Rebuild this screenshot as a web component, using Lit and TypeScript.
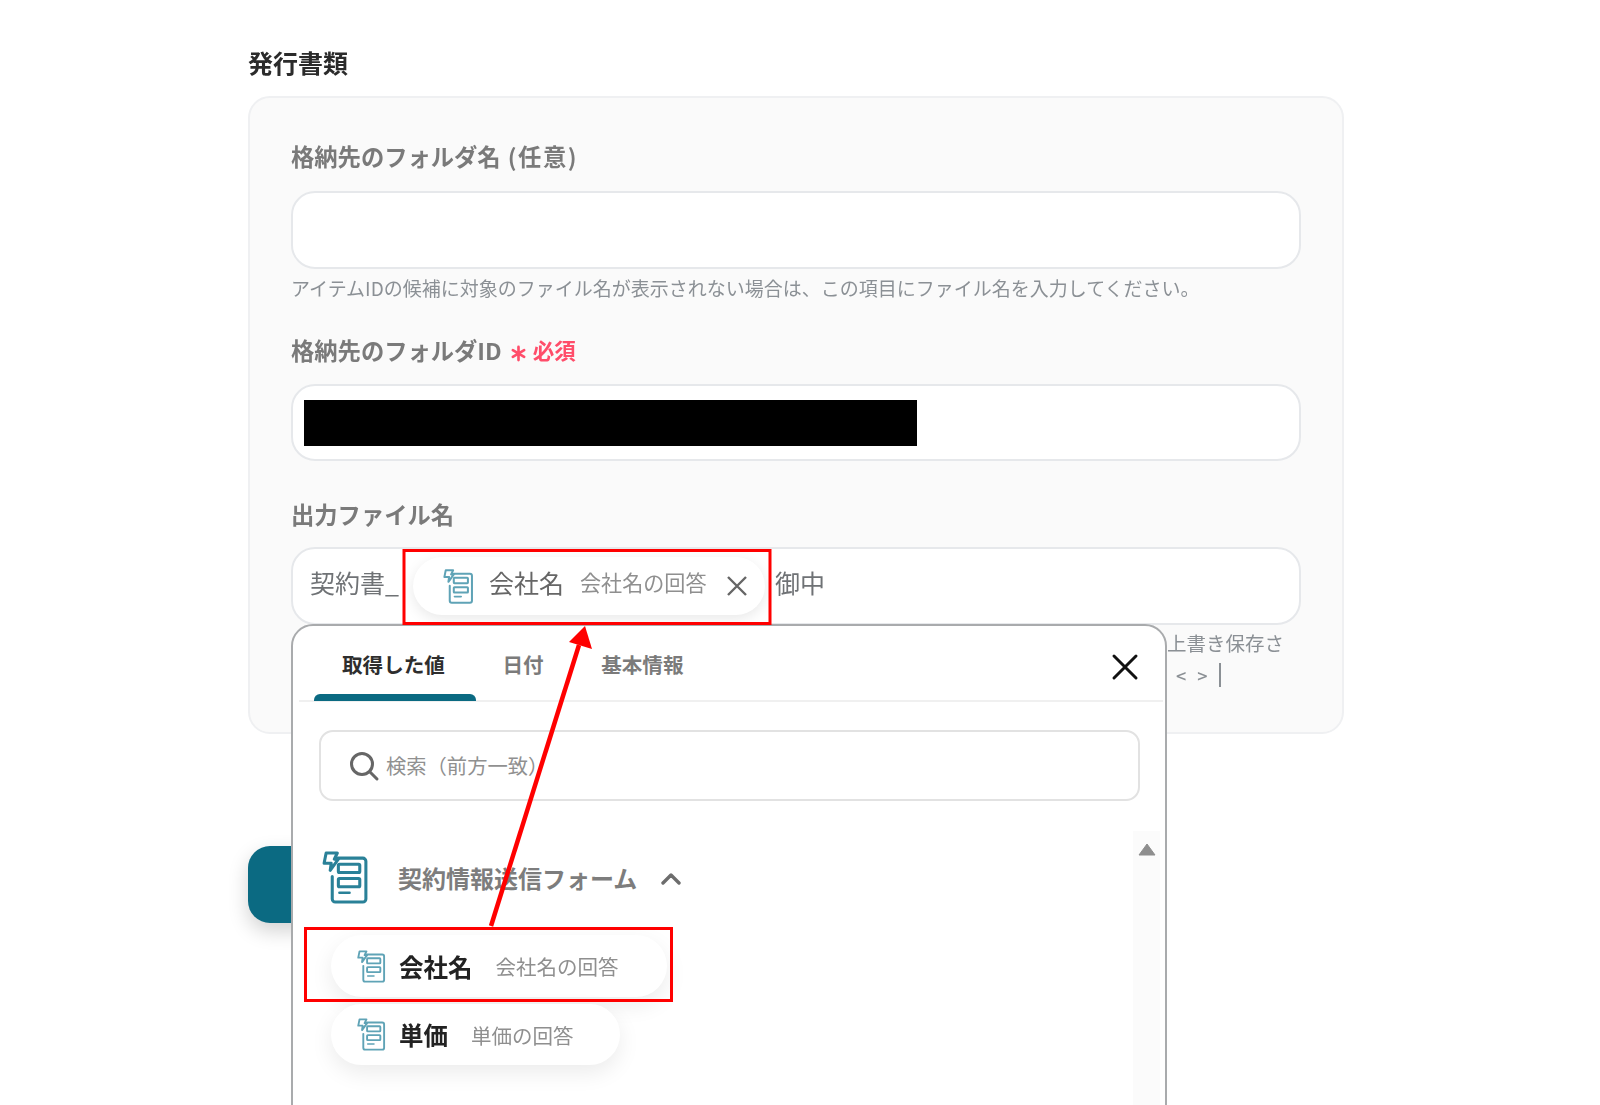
import { LitElement, html, css, svg } from "lit";
import { customElement } from "lit/decorators.js";

const formIcon = (cls: string) => html`<svg class=${cls} viewBox="0 0 46 52" fill="none" stroke="currentColor" stroke-width="3" stroke-linejoin="round" stroke-linecap="round">
  <path d="M14 7 H40 a3 3 0 0 1 3 3 V47 a3 3 0 0 1 -3 3 H13 a3 3 0 0 1 -3 -3 V25"/>
  <path d="M4 2 H15 L12 8 H16 L8 19 L9 12 H2 Z"/>
  <rect x="16" y="13" width="21" height="8" rx="1"/>
  <rect x="16" y="27" width="21" height="8" rx="1"/>
  <path d="M17 41 H27" stroke-width="2.4"/>
</svg>`;

@customElement("app-root")
export class AppRoot extends LitElement {
  static styles = css`
    :host {
      display: block;
      position: relative;
      width: 1600px;
      height: 1105px;
      overflow: hidden;
      background: #fff;
      font-family: "Noto Sans CJK JP", "Noto Sans", sans-serif;
      color: #777;
    }
    * { box-sizing: border-box; }
    .page {
      display: flex;
      flex-direction: column;
      align-items: flex-start;
      padding: 45px 0 0 248px;
      filter: blur(0.35px);
    }
    .heading {
      font-size: 25px;
      line-height: 34px;
      font-weight: 700;
      color: #2b2b2b;
      margin: 0 0 17px 0;
    }
    .panel {
      width: 1096px;
      height: 638px;
      padding: 42px 41px 0 41px;
      background: #fafafa;
      border: 2px solid #eff0f2;
      border-radius: 22px;
      display: flex;
      flex-direction: column;
    }
    .label {
      font-size: 23.3px;
      line-height: 32px;
      font-weight: 700;
      color: #7a7a7a;
      display: flex;
      align-items: center;
      height: 36px;
      padding-bottom: 4px;
      white-space: nowrap;
    }
    .paren { margin-left: 7px; letter-spacing: 1.6px; }
    .req { color: #ff4d6a; font-size: 21.5px; margin-left: 8px; display: flex; align-items: center; }
    .star { width: 17px; height: 17px; margin-right: 6px; margin-top: 6px; flex: none; }
    .input {
      width: 1010px;
      height: 78px;
      margin-top: 15px;
      background: #fff;
      border: 2px solid #e6e8eb;
      border-radius: 24px;
      flex: none;
    }
    .help {
      font-size: 19px;
      line-height: 26px;
      color: #8b9095;
      margin-top: 6px;
      white-space: nowrap;
    }
    .l2 { margin-top: 33px; }
    .l3 { margin-top: 37px; }
    .id-input { display: flex; align-items: center; padding-left: 11px; margin-top: 14px; height: 77px; }
    .mask { width: 613px; height: 46px; background: #000; }
    .file-input {
      display: flex;
      align-items: center;
      padding: 0 0 0 17px;
      font-size: 25px;
      color: #6f7275;
      margin-top: 13px;
    }
    .lifted { margin-bottom: 8px; }
    .chip {
      display: flex;
      align-items: center;
      background: #fff;
      box-shadow: 0 4px 14px rgba(0,0,0,0.09);
      flex: none;
    }
    .file-chip { width: 352px; height: 58px; border-radius: 29px; margin-left: 14px; margin-right: 10px; padding-left: 30px; }
    .icon-sm { width: 31px; height: 35px; color: #5fa3b6; flex: none; }
    .file-chip .name { font-size: 25px; color: #666; margin-left: 15px; width: 74px; white-space: nowrap; }
    .sub { font-size: 20.8px; color: #8f8f8f; white-space: nowrap; }
    .file-chip .sub { margin-left: 17px; font-size: 21.1px; }
    .x-sm { width: 22px; height: 22px; margin-left: 19px; color: #666; flex: none; }
    .suffix { white-space: nowrap; }
    .behind {
      align-self: flex-end;
      margin-top: 3px;
      width: 134px;
      font-size: 19.5px;
      line-height: 30px;
      color: #8b9095;
      white-space: nowrap;
    }
    .code { display: flex; align-items: center; gap: 11px; padding-left: 9px; margin-top: 2px; font-size: 18px; line-height: 30px; font-weight: 500; }
    .caret { width: 2px; height: 24px; background: #8b9095; }
    .cta {
      width: 300px;
      height: 77px;
      margin-top: 112px;
      background: #0b6a82;
      border-radius: 22px;
      box-shadow: 0 8px 20px rgba(0,0,0,0.18);
    }

    .popup {
      position: absolute;
      left: 291px;
      top: 624px;
      width: 876px;
      height: 520px;
      background: #fff;
      border: 2px solid #a9abad;
      border-radius: 22px;
      display: flex;
      flex-direction: column;
      filter: blur(0.35px);
    }
    .tabs {
      display: flex;
      align-items: center;
      height: 76px;
      flex: none;
      margin: 0 0 0 6px;
      padding-left: 16px;
      width: 864px;
      border-bottom: 2px solid #f0f0f0;
      position: relative;
      font-size: 20.6px;
      font-weight: 700;
      color: #7b7b7b;
      gap: 57.5px;
    }
    .tab { position: relative; line-height: 32px; margin-top: 2px; margin-left: 27px; }
    .tab + .tab { margin-left: 0; }
    .tab.on { color: #2e2e2e; }
    .tab.on::after {
      content: "";
      position: absolute;
      left: -28px;
      width: 162px;
      bottom: -21px;
      height: 7px;
      background: #0b6a82;
      border-radius: 6px 6px 0 0;
    }
    .close {
      position: absolute;
      right: 24px;
      top: 27px;
      width: 28px;
      height: 28px;
      color: #111;
    }
    .search {
      flex: none;
      margin: 28px 0 0 26px;
      width: 821px;
      height: 71px;
      border: 2px solid #e2e2e2;
      border-radius: 14px;
      display: flex;
      align-items: center;
      padding-left: 27px;
      font-size: 20.3px;
      color: #909090;
      gap: 6px;
    }
    .search svg { width: 32px; height: 32px; color: #666; flex: none; }
    .search span { margin-bottom: 2px; }
    .body { position: relative; flex: 1; display: flex; flex-direction: column; padding-left: 29px; margin-top: 30px; }
    .track {
      position: absolute;
      right: 5px;
      top: 0;
      bottom: 0;
      width: 27px;
      background: #fbfbfb;
      display: flex;
      justify-content: center;
      align-items: flex-start;
      padding-top: 12px;
    }
    .tri { width: 18px; height: 13px; color: #8e8e8e; }
    .group { display: flex; align-items: center; height: 54px; margin-top: 19px; }
    .icon-lg { width: 47px; height: 53px; color: #2a8198; flex: none; }
    .gtitle { font-size: 24px; font-weight: 700; color: #7d7d7d; margin-left: 29px; white-space: nowrap; }
    .chev { width: 22px; height: 14px; color: #6d6d6d; margin-left: 23px; margin-top: 3px; }
    .items { display: flex; flex-direction: column; margin: 31px 0 0 9px; align-items: flex-start; gap: 7px; }
    .item { padding: 0 48px 0 26px; height: 62px; border-radius: 31px; box-shadow: 0 8px 22px rgba(0,0,0,0.08); }
    .item.second { padding-right: 46px; height: 61px; }
    .item .icon-sm { width: 29px; height: 33px; }
    .item .name { font-size: 24.5px; font-weight: 700; color: #222; margin-left: 13px; }
    .item .sub { margin-left: 23px; font-size: 20.5px; }

    .overlay { position: absolute; left: 0; top: 0; width: 1600px; height: 1105px; pointer-events: none; }
  `;

  render() {
    return html`
      <div class="page">
        <div class="heading">発行書類</div>
        <div class="panel">
          <div class="label">格納先のフォルダ名<span class="paren">(任意)</span></div>
          <div class="input"></div>
          <div class="help">アイテムIDの候補に対象のファイル名が表示されない場合は、この項目にファイル名を入力してください。</div>
          <div class="label l2">格納先のフォルダID<span class="req">
            <svg class="star" viewBox="0 0 18 18" stroke="currentColor" stroke-width="2.8" stroke-linecap="round"><path d="M9 2 V16 M3 5.5 L15 12.5 M15 5.5 L3 12.5"/></svg>必須</span></div>
          <div class="input id-input"><div class="mask"></div></div>
          <div class="label l3">出力ファイル名</div>
          <div class="input file-input">
            <span class="lifted">契約書_</span>
            <div class="chip file-chip">
              ${formIcon("icon-sm")}
              <span class="name lifted">会社名</span>
              <span class="sub lifted">会社名の回答</span>
              <svg class="x-sm" viewBox="0 0 22 22" stroke="currentColor" stroke-width="2.4" fill="none"><path d="M2 2 L20 20 M20 2 L2 20"/></svg>
            </div>
            <span class="suffix lifted">御中</span>
          </div>
          <div class="behind">
            <div>上書き保存さ</div>
            <div class="code"><span>&lt;</span><span>&gt;</span><span class="caret"></span></div>
          </div>
        </div>
        <div class="cta"></div>
      </div>

      <div class="popup">
        <div class="tabs">
          <span class="tab on">取得した値</span>
          <span class="tab">日付</span>
          <span class="tab">基本情報</span>
          <svg class="close" viewBox="0 0 28 28" stroke="currentColor" stroke-width="3" stroke-linecap="round" fill="none"><path d="M3 3 L25 25 M25 3 L3 25"/></svg>
        </div>
        <div class="search">
          <svg viewBox="0 0 32 32" fill="none" stroke="currentColor" stroke-width="3" stroke-linecap="round"><circle cx="14" cy="14" r="10.5"/><path d="M22 22 L29 29"/></svg>
          <span>検索（前方一致）</span>
        </div>
        <div class="body">
          <div class="track"><svg class="tri" viewBox="0 0 18 13"><path d="M9 1 L17 12 H1 Z" fill="currentColor" stroke="currentColor" stroke-linejoin="round"/></svg></div>
          <div class="group">
            ${formIcon("icon-lg")}
            <span class="gtitle">契約情報送信フォーム</span>
            <svg class="chev" viewBox="0 0 22 14" fill="none" stroke="currentColor" stroke-width="3.4" stroke-linecap="round" stroke-linejoin="round"><path d="M3 11 L11 3 L19 11"/></svg>
          </div>
          <div class="items">
            <div class="chip item">${formIcon("icon-sm")}<span class="name">会社名</span><span class="sub">会社名の回答</span></div>
            <div class="chip item second">${formIcon("icon-sm")}<span class="name">単価</span><span class="sub">単価の回答</span></div>
          </div>
        </div>
      </div>

      <svg class="overlay" viewBox="0 0 1600 1105" fill="none">
        ${svg`
          <rect x="404" y="550.5" width="366" height="73" stroke="#f00" stroke-width="3"/>
          <rect x="305.5" y="928.5" width="366" height="72" stroke="#f00" stroke-width="3"/>
          <path d="M491 926 L579 645" stroke="#f00" stroke-width="4.5"/>
          <path d="M585 626 L592 649 L569 642 Z" fill="#f00"/>
        `}
      </svg>
    `;
  }
}
